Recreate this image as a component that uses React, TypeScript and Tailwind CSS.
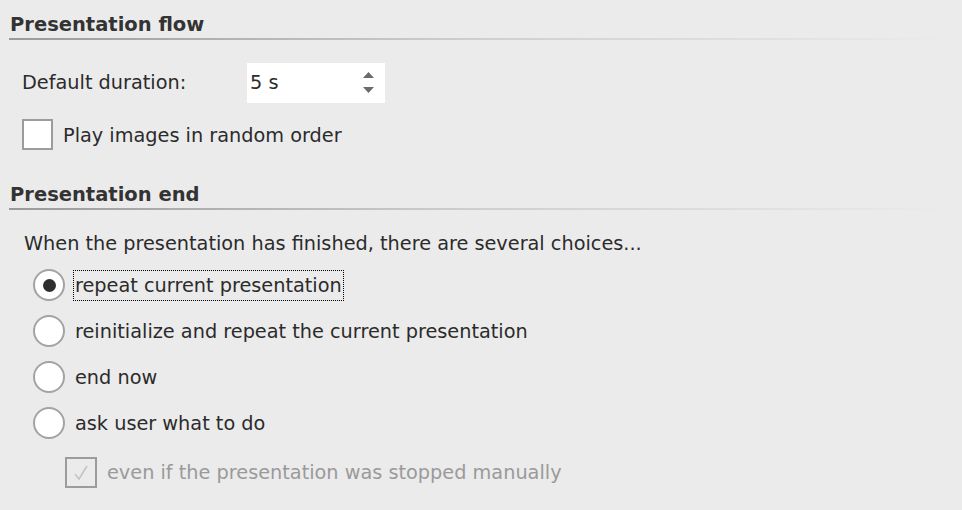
const font = { fontFamily: '"DejaVu Sans", Verdana, sans-serif' }

const SectionHeading = ({ title, top }: { title: string; top: string }) => (
  <div className={top}>
    <div className="h-6 pl-[10px] pt-px text-[19.5px] leading-6 font-bold text-[#333]">{title}</div>
    <div className="mt-[2px] ml-[9px] mr-[12px] h-[2px] bg-gradient-to-r from-[#9a9a9a] via-[#cfcfcf] to-[#ebebeb]" />
  </div>
)

const Radio = ({ label, checked }: { label: string; checked?: boolean }) => (
  <div className="flex h-[46px] items-center pl-[33px]">
    <span className="flex h-[32px] w-[32px] items-center justify-center rounded-full border-2 border-[#a3a3a3] bg-white">
      {checked && <span className="h-[13px] w-[13px] rounded-full bg-[#2e2e2e]" />}
    </span>
    <span
      className={
        'ml-[8px] flex h-[31px] items-center px-[2px] pt-px ' +
        (checked ? 'outline-1 outline-dotted outline-black -outline-offset-1' : '')
      }
    >
      {label}
    </span>
  </div>
)

export default function App() {
  return (
    <div
      className="h-[510px] w-[962px] overflow-hidden bg-[#ebebeb] text-[19.3px] leading-6 text-[#2b2b2b]"
      style={font}
    >
      <SectionHeading title="Presentation flow" top="pt-[12px]" />

      <div className="mt-[22px] flex h-[40px] items-center pl-[22px] pt-px">
        <span className="w-[225px]">Default duration:</span>
        <div className="flex h-[40px] w-[138px] items-center justify-between bg-white pl-[3px] pr-[11px]">
          <span className="pt-px">5 s</span>
          <span className="flex flex-col items-center gap-[9px]">
            <svg width="11" height="6" viewBox="0 0 11 6">
              <path d="M0 6 L5.5 0 L11 6 Z" fill="#6b6b6b" />
            </svg>
            <svg width="11" height="6" viewBox="0 0 11 6">
              <path d="M0 0 L5.5 6 L11 0 Z" fill="#6b6b6b" />
            </svg>
          </span>
        </div>
      </div>

      <div className="mt-[17px] flex h-[31px] items-center pl-[22px]">
        <span className="h-[31px] w-[31px] border-2 border-[#9c9c9c] bg-white" />
        <span className="ml-[10px] pt-[2px]">Play images in random order</span>
      </div>

      <SectionHeading title="Presentation end" top="mt-[32px]" />

      <div className="mt-[21px] pl-[24px] pt-px">When the presentation has finished, there are several choices...</div>

      <div className="mt-[6px]">
        <Radio label="repeat current presentation" checked />
        <Radio label="reinitialize and repeat the current presentation" />
        <Radio label="end now" />
        <Radio label="ask user what to do" />
      </div>

      <div className="mt-[11px] flex h-[31px] items-center pl-[65px] text-[#9a9a9a]">
        <span className="flex h-[31px] w-[32px] items-center justify-center border-2 border-[#9c9c9c]">
          <svg width="18" height="18" viewBox="0 0 18 18">
            <path d="M3 10 L7 15 L15 2" fill="none" stroke="#c4c4c4" strokeWidth="1.6" />
          </svg>
        </span>
        <span className="ml-[10px] pt-px">even if the presentation was stopped manually</span>
      </div>
    </div>
  )
}
